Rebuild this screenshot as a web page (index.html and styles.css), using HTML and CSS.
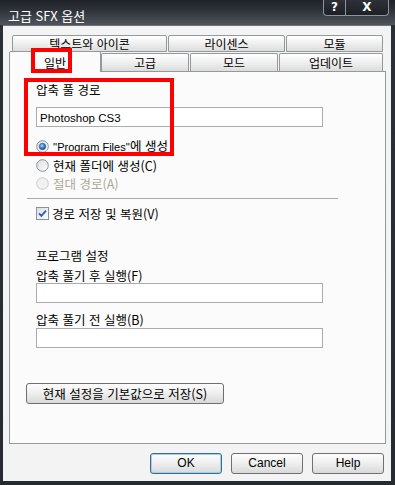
FILE: index.html
```html
<!DOCTYPE html>
<html lang="ko">
<head>
<meta charset="utf-8">
<title>고급 SFX 옵션</title>
<link rel="stylesheet" href="styles.css">
</head>
<body>
<div class="window">
  <div class="titlebar">
    <span class="title">고급 SFX 옵션</span>
    <div class="caption">
      <span class="cb cb-help">?</span>
      <span class="cb cb-close">X</span>
    </div>
  </div>
  <div class="client">
    <div class="tabrow back">
      <div class="tab w-text">텍스트와 아이콘</div>
      <div class="tab w-lic">라이센스</div>
      <div class="tab w-mod">모듈</div>
    </div>
    <div class="tabrow front">
      <div class="tab sel w-gen">일반</div>
      <div class="tab w-adv">고급</div>
      <div class="tab w-mode">모드</div>
      <div class="tab w-upd">업데이트</div>
    </div>
    <div class="panel">
      <div class="label l-path">압축 풀 경로</div>
      <div class="field f-path"><span class="lat">Photoshop CS3</span></div>
      <div class="opt o-1">
        <svg class="rb" width="13" height="13" viewBox="0 0 13 13">
          <defs>
            <linearGradient id="rbfill" x1="0" y1="0" x2="1" y2="1">
              <stop offset="0" stop-color="#d9dcdf"/>
              <stop offset="1" stop-color="#ffffff"/>
            </linearGradient>
            <radialGradient id="rbdot" cx="0.4" cy="0.35" r="0.7">
              <stop offset="0" stop-color="#a9dcff"/>
              <stop offset="0.5" stop-color="#3a8ad6"/>
              <stop offset="1" stop-color="#134e8e"/>
            </radialGradient>
          </defs>
          <circle cx="6.5" cy="6.5" r="5.8" fill="url(#rbfill)" stroke="#8a939b" stroke-width="1"/>
          <circle cx="6.5" cy="6.5" r="3.2" fill="url(#rbdot)" stroke="#23486f" stroke-width="0.6"/>
        </svg>
        <span><span class="lat">''Program Files''</span>에 생성</span>
      </div>
      <div class="opt o-2">
        <svg class="rb" width="13" height="13" viewBox="0 0 13 13">
          <circle cx="6.5" cy="6.5" r="5.8" fill="url(#rbfill)" stroke="#8a939b" stroke-width="1"/>
        </svg>
        <span>현재 폴더에 생성(C)</span>
      </div>
      <div class="opt o-3 disabled">
        <svg class="rb" width="13" height="13" viewBox="0 0 13 13">
          <circle cx="6.5" cy="6.5" r="5.8" fill="#f1f1f1" stroke="#cbcbc6" stroke-width="1"/>
        </svg>
        <span>절대 경로(A)</span>
      </div>
      <div class="sep"></div>
      <div class="opt o-check">
        <svg class="cbx" width="13" height="13" viewBox="0 0 13 13">
          <rect x="0.5" y="0.5" width="12" height="12" fill="url(#rbfill)" stroke="#8a939b"/>
          <path d="M3 6.3 L5.4 8.8 L10 3.6" fill="none" stroke="#2b5fb8" stroke-width="1.8"/>
        </svg>
        <span>경로 저장 및 복원(V)</span>
      </div>
      <div class="label l-prog">프로그램 설정</div>
      <div class="label l-after">압축 풀기 후 실행(F)</div>
      <div class="field f-after"></div>
      <div class="label l-before">압축 풀기 전 실행(B)</div>
      <div class="field f-before"></div>
      <div class="btn btn-save">현재 설정을 기본값으로 저장(S)</div>
    </div>
    <div class="buttons">
      <div class="btn btn-dlg btn-default lat">OK</div>
      <div class="btn btn-dlg lat">Cancel</div>
      <div class="btn btn-dlg lat">Help</div>
    </div>
  </div>
  <div class="hl hl-tab"></div>
  <div class="hl hl-group"></div>
</div>
</body>
</html>
```
FILE: styles.css
```css
* { box-sizing: border-box; }
html, body { margin: 0; padding: 0; }
body {
  width: 395px;
  height: 485px;
  overflow: hidden;
  background: #2e333b;
  font: 12.5px/15px "Noto Sans CJK KR", "Liberation Sans", sans-serif;
  color: #000;
}
.lat {
  font-family: "Liberation Sans", Arial, sans-serif;
  font-size: 11px;
}
.window {
  position: relative;
  width: 395px;
  height: 485px;
  display: flex;
  flex-direction: column;
  background: linear-gradient(#2b2f36, #262a31);
}
.titlebar {
  height: 25px;
  flex: none;
  display: flex;
  justify-content: space-between;
  align-items: flex-start;
  background: linear-gradient(#1f2227 0%, #30343b 45%, #50555d 100%);
}
.title {
  color: #fff;
  font-size: 13px;
  padding: 8px 0 0 8px;
  line-height: 15px;
}
.caption {
  display: flex;
  margin-right: 6px;
  height: 16px;
  border: 1px solid #8e939b;
  border-top: none;
  border-radius: 0 0 4px 4px;
  background: linear-gradient(#2e3238, #1d2025);
}
.cb {
  color: #fff;
  font: bold 12px/15px "DejaVu Sans", sans-serif;
  text-align: center;
}
.cb-help { width: 22px; border-right: 1px solid #8e939b; }
.cb-close { width: 42px; }

.client {
  flex: 1;
  margin: 0 4px 4px 3px;
  background: #f3f3f3;
  border-top: 1px solid #6e737b;
  padding-top: 9px;
  display: flex;
  flex-direction: column;
}
.tabrow { display: flex; }
.tabrow.back { margin-left: 9px; height: 17px; gap: 1px; }
.tabrow.front { margin-left: 6px; margin-top: 1px; height: 18px; align-items: flex-end; }
.tab {
  border: 1px solid #919b9c;
  border-radius: 2px 2px 0 0;
  background: linear-gradient(#ffffff, #f3f3f3 40%, #dcdcdc);
  text-align: center;
  font-size: 12px;
  line-height: 15px;
}
.back .tab { height: 17px; }
.front .tab { height: 18px; border-bottom: none; line-height: 17px; }
.front .tab.sel {
  height: 21px;
  margin-bottom: -1px;
  position: relative;
  z-index: 1;
  background: #fbfbfb;
  line-height: 21px;
}
.w-text { width: 155px; }
.w-lic { width: 117px; }
.w-mod { width: 97px; }
.w-gen { width: 92px; }
.w-adv { width: 88px; }
.w-mode { width: 88px; margin-left: 1px; }
.w-upd { width: 104px; margin-left: 1px; }

.panel {
  margin-left: 6px;
  width: 377px;
  height: 373px;
  flex: none;
  border: 1px solid #919b9c;
  background: #fbfbfb;
  padding: 10px 0 0 26px;
  display: flex;
  flex-direction: column;
  align-items: flex-start;
}
.label { line-height: 15px; }
.field {
  width: 287px;
  height: 20px;
  border: 1px solid #a7acb0;
  background: #fff;
  padding-left: 3px;
  line-height: 18px;
}
.field .lat { font-size: 11.5px; }
.f-path { margin-top: 10px; }
.opt {
  display: flex;
  align-items: center;
  gap: 4px;
  height: 16px;
}
.opt svg { flex: none; display: block; }
.o-1 { margin-top: 11px; }
.o-2 { margin-top: 3px; }
.o-3 { margin-top: 2px; }
.disabled { color: #aca899; }
.sep {
  margin-top: 7px;
  margin-left: -9px;
  width: 311px;
  height: 1px;
  background: #a9a9a9;
}
.o-check { margin-top: 6px; gap: 3px; }
.l-prog { margin-top: 27px; }
.l-after { margin-top: 5px; }
.l-before { margin-top: 9px; }
.f-before { margin-top: 1px; }

.btn {
  height: 21px;
  border: 1px solid #707070;
  border-radius: 3px;
  background: linear-gradient(#fdfdfd, #f0f0f0 45%, #d9d9d9);
  text-align: center;
  line-height: 19px;
}
.btn-save {
  margin-top: 35px;
  margin-left: -10px;
  width: 198px;
}
.buttons {
  display: flex;
  justify-content: flex-end;
  gap: 9px;
  margin-top: 9px;
  padding-right: 7px;
}
.btn-dlg { width: 72px; font-size: 12px; }
.btn-default {
  border-color: #3d6d8e;
  box-shadow: inset 0 0 0 1px #9fd0ee;
}

.hl {
  position: absolute;
  z-index: 5;
  border: 4px solid #ff0000;
  pointer-events: none;
}
.hl-tab { left: 31px; top: 48px; width: 41px; height: 25px; }
.hl-group { left: 24px; top: 78px; width: 150px; height: 78px; }
```
